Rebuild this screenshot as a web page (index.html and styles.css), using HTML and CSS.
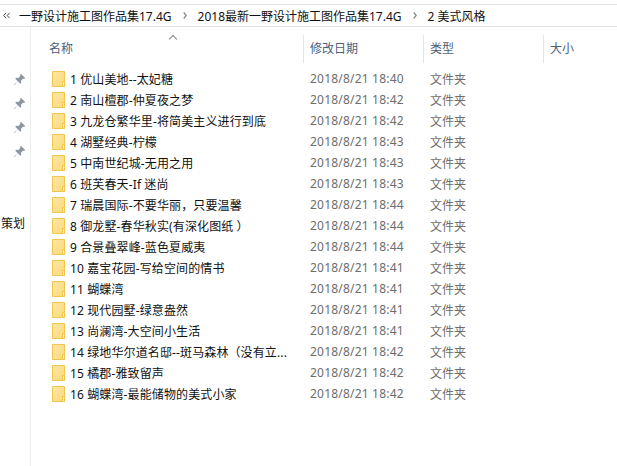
FILE: index.html
```html
<!DOCTYPE html>
<html lang="zh-CN">
<head>
    <meta charset="UTF-8">
    <meta name="viewport" content="width=device-width, initial-scale=1.0">
    <title>2 美式风格</title>
    <link rel="stylesheet" href="styles.css">
</head>
<body>
    <svg class="defs" width="0" height="0">
        <defs>
            <linearGradient id="folder-fill" x1="0" y1="0" x2="1" y2="1">
                <stop offset="0" stop-color="#fde7a4"/>
                <stop offset="1" stop-color="#fcd97a"/>
            </linearGradient>
        </defs>
        <symbol id="folder" viewBox="0 0 13 16">
            <path d="M.5.5h12v15H.5z" fill="url(#folder-fill)" stroke="#f0c64e"/>
            <path d="M10.500 15.500v-5h2v5z" fill="#fff4cf" stroke="#f0c64e"/>
        </symbol>
        <symbol id="pin" viewBox="0 0 13 13">
            <path d="M8 .8l4.200 4.200-1.200 1-1-.3-2 2.100.2 2-1 1-2.500-2.500L1.200 12.200.8 11.800l3.900-3.500-2.500-2.500 1-1 2 .2 2.100-2-.3-1z" fill="#8f98a1"/>
        </symbol>
    </svg>

    <div class="address">
        <svg class="crumb-more" viewBox="0 0 8 7"><path d="M3.500.5L.8 3.500l2.700 3M7.500.5L4.800 3.500l2.700 3" fill="none" stroke="#444" stroke-width="1.100"/></svg>
        <span class="crumb">一野设计施工图作品集17.4G</span>
        <span class="crumb-sep"><svg viewBox="0 0 4 7"><path d="M.7.5l2.500 3-2.500 3" fill="none" stroke="#8a8a8a" stroke-width="1.300"/></svg></span>
        <span class="crumb">2018最新一野设计施工图作品集17.4G</span>
        <span class="crumb-sep"><svg viewBox="0 0 4 7"><path d="M.7.5l2.500 3-2.500 3" fill="none" stroke="#8a8a8a" stroke-width="1.300"/></svg></span>
        <span class="crumb">2 美式风格</span>
    </div>

    <div class="main">
        <div class="sidebar">
            <div class="pins">
                <svg class="pin"><use href="#pin"/></svg>
                <svg class="pin"><use href="#pin"/></svg>
                <svg class="pin"><use href="#pin"/></svg>
                <svg class="pin"><use href="#pin"/></svg>
            </div>
            <div class="side-label">策划</div>
        </div>

        <div class="list">
            <div class="head">
                <span class="sort-caret"></span>
                <div class="head-cell">名称</div>
                <div class="head-cell">修改日期</div>
                <div class="head-cell">类型</div>
                <div class="head-cell">大小</div>
            </div>
            <div class="rows" id="rows"></div>
        </div>
    </div>

    <script>
        const items = [
            ['1 优山美地--太妃糖', '18:40'],
            ['2 南山檀郡-仲夏夜之梦', '18:42'],
            ['3 九龙仓繁华里-将简美主义进行到底', '18:42'],
            ['4 湖墅经典-柠檬', '18:43'],
            ['5 中南世纪城-无用之用', '18:43'],
            ['6 班芙春天-If 迷尚', '18:43'],
            ['7 瑞晨国际-不要华丽，只要温馨', '18:44'],
            ['8 御龙墅-春华秋实(有深化图纸 ）', '18:44'],
            ['9 合景叠翠峰-蓝色夏威夷', '18:44'],
            ['10 嘉宝花园-写给空间的情书', '18:41'],
            ['11 蝴蝶湾', '18:41'],
            ['12 现代园墅-绿意盎然', '18:41'],
            ['13 尚澜湾-大空间小生活', '18:41'],
            ['14 绿地华尔道名邸--斑马森林（没有立...', '18:42'],
            ['15 橘郡-雅致留声', '18:42'],
            ['16 蝴蝶湾-最能储物的美式小家', '18:42']
        ];

        const rows = document.getElementById('rows');
        rows.innerHTML = items.map(function(item) {
            return '<div class="row">'
                + '<div class="name"><svg class="folder"><use href="#folder"/></svg><span>' + item[0] + '</span></div>'
                + '<div class="meta date">2018/8/21 ' + item[1] + '</div>'
                + '<div class="meta">文件夹</div>'
                + '</div>';
        }).join('');
    </script>
</body>
</html>
```

FILE: styles.css
```css
html, body {
    margin: 0;
    height: 100%;
}
body {
    font-family: "Noto Sans", "Noto Sans CJK SC", sans-serif;
    font-size: 12px;
    color: #111;
    background: #fff;
    overflow: hidden;
}
.defs {
    position: absolute;
}
.address {
    display: flex;
    align-items: center;
    height: 21px;
    margin-top: 4px;
    padding-left: 3px;
    border-top: 1px solid #e3e3e3;
    border-bottom: 1px solid #e3e3e3;
    white-space: nowrap;
}
.crumb-more {
    flex: none;
    width: 7px;
    height: 7px;
    margin-right: 9px;
}
.crumb-sep {
    display: flex;
    justify-content: center;
    width: 26px;
}
.crumb-sep svg {
    width: 4px;
    height: 7px;
}
.main {
    display: flex;
    height: 439px;
}
.sidebar {
    width: 30px;
    border-right: 1px solid #eeeeee;
}
.pins {
    display: flex;
    flex-direction: column;
    align-items: flex-end;
    gap: 11px;
    padding: 46px 4px 0 0;
}
.pin {
    display: block;
    width: 13px;
    height: 13px;
}
.side-label {
    margin-top: 57px;
    padding-left: 1px;
    line-height: 18px;
}
.list {
    flex: 1;
    padding-top: 8px;
}
.head {
    position: relative;
    display: grid;
    grid-template-columns: 273px 120px 120px 1fr;
    height: 28px;
    margin-bottom: 5px;
    color: #4c607a;
}
.head-cell {
    padding-left: 6px;
    line-height: 27px;
    border-right: 1px solid #e5e5e5;
}
.head-cell:first-of-type {
    padding-left: 18px;
}
.head-cell:last-child {
    border-right: none;
}
.sort-caret {
    position: absolute;
    left: 139px;
    top: 1px;
    width: 5px;
    height: 5px;
    border-top: 1px solid #888;
    border-left: 1px solid #888;
    transform: rotate(45deg);
}
.rows {
    display: flex;
    flex-direction: column;
}
.row {
    display: grid;
    grid-template-columns: 279px 120px 1fr;
    height: 21px;
    align-items: center;
}
.name {
    display: flex;
    align-items: center;
    gap: 5px;
    padding-left: 21px;
    white-space: nowrap;
    letter-spacing: 0.12px;
}
.folder {
    flex: none;
    width: 13px;
    height: 16px;
}
.meta {
    color: #6d6d6d;
}
.date {
    letter-spacing: 0.2px;
}
```
